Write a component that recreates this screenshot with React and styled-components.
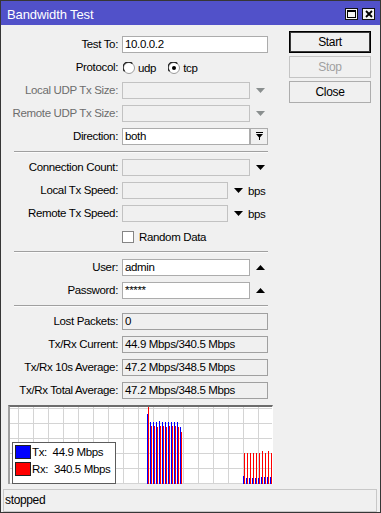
import styled, { createGlobalStyle } from "styled-components";

const GlobalStyle = createGlobalStyle`
  * { box-sizing: border-box; }
  html, body {
    margin: 0;
    padding: 0;
    background: #f0f0f0;
  }
  body {
    font-family: "Liberation Sans", Arial, sans-serif;
    font-size: 11.5px;
    letter-spacing: -0.35px;
    color: #000;
  }
`;

const Window = styled.div`
  width: 381px;
  height: 513px;
  border: 1px solid #363636;
  background: #f0f0f0;
  display: flex;
  flex-direction: column;
`;

const TitleBar = styled.div`
  height: 24px;
  flex: none;
  background: #5151c9;
  display: flex;
  align-items: center;
  padding: 0 5px 0 6px;
`;

const Title = styled.div`
  color: #fff;
  font-size: 13px;
  letter-spacing: -0.1px;
  padding-top: 3px;
`;

const TitleButtons = styled.div`
  margin-left: auto;
  margin-top: 2px;
  display: flex;
  gap: 4px;
`;

const TitleBtn = styled.div`
  width: 13px;
  height: 12px;
  border: 1px solid #111;
  background: #f4f4f4;
  display: flex;
  align-items: center;
  justify-content: center;
`;

const Main = styled.div`
  display: flex;
  align-items: flex-start;
  flex: 1;
`;

const Form = styled.div`
  margin-left: 7px;
  padding-top: 11px;
  display: grid;
  grid-template-columns: 110px 151px;
  column-gap: 4px;
  row-gap: 6px;
`;

const Label = styled.div`
  height: 17px;
  line-height: 17px;
  text-align: right;
  white-space: nowrap;
  color: ${(p) => (p.$disabled ? "#6d6d6d" : "#000")};
`;

const Field = styled.div`
  height: 17px;
  display: flex;
  align-items: center;
`;

const Input = styled.div`
  width: ${(p) => p.$w}px;
  height: 17px;
  line-height: 15px;
  padding-left: 2px;
  white-space: nowrap;
  overflow: hidden;
  border: 1px solid
    ${(p) => (p.$kind === "disabled" ? "#c2c2c2" : p.$kind === "readonly" ? "#a0a0a0" : "#acacac")};
  background: ${(p) => (p.$kind === "edit" ? "#fff" : "#f0f0f0")};
`;

const DropBtn = styled.div`
  width: 18px;
  height: 17px;
  border: 1px solid #acacac;
  background: #f0f0f0;
  display: flex;
  align-items: center;
  justify-content: center;
`;

const Arrow = styled.svg`
  flex: none;
  margin-left: 6px;
`;

const Unit = styled.span`
  margin-left: 5px;
`;

const RadioItem = styled.label`
  display: flex;
  align-items: center;
  gap: 3px;
  margin-right: 11px;
  margin-left: 1px;
`;

const Check = styled.div`
  width: 12px;
  height: 12px;
  border: 1px solid #858585;
  background: #fff;
  margin-right: 5px;
`;

const Separator = styled.div`
  grid-column: 1 / -1;
  margin-left: 6px;
  width: 254px;
  height: 2px;
  border-top: 1px solid #a0a0a0;
  border-bottom: 1px solid #fbfbfb;
`;

const Graph = styled.div`
  grid-column: 1 / -1;
  position: relative;
  height: 79px;
  background: #fff;
  border-top: 2px solid #6c6c6c;
  border-left: 2px solid #a0a0a0;
  border-right: 1px solid #fff;
`;

const Legend = styled.div`
  position: absolute;
  left: 2px;
  top: 35px;
  width: 104px;
  height: 42px;
  border: 1px solid #5c5c5c;
  background: #fff;
  padding: 2px 0 0 2px;
  display: flex;
  flex-direction: column;
  gap: 3px;
`;

const LegendItem = styled.div`
  display: flex;
  align-items: center;
  height: 14px;
  white-space: pre;
  font-size: 11.5px;
`;

const Swatch = styled.div`
  width: 16px;
  height: 14px;
  margin-right: 1px;
  border: 1px solid #222;
  background: ${(p) => p.$color};
`;

const ButtonCol = styled.div`
  margin-left: 16px;
  margin-top: 6px;
  width: 82px;
  display: flex;
  flex-direction: column;
  gap: 3px;
`;

const Button = styled.div`
  height: 22px;
  line-height: 20px;
  text-align: center;
  font-size: 12px;
  background: #f0f0f0;
  border: 1px solid ${(p) => (p.$default ? "#000" : p.$disabled ? "#c4c4c4" : "#adadad")};
  box-shadow: ${(p) => (p.$default ? "inset 0 0 0 1px #3a3a3a" : "none")};
  color: ${(p) => (p.$disabled ? "#a0a0a0" : "#000")};
`;

const StatusBar = styled.div`
  flex: none;
  height: 23px;
  margin: 0 3px 0 2px;
  border: 1px solid #c8c8c8;
  padding-left: 1px;
  line-height: 21px;
  font-size: 12px;
`;

function Tri({ up, color = "#000" }) {
  return (
    <Arrow width="9" height="5" viewBox="0 0 9 5">
      <polygon points={up ? "0,5 9,5 4.5,0" : "0,0 9,0 4.5,5"} fill={color} />
    </Arrow>
  );
}

function Radio({ checked }) {
  return (
    <svg width="12" height="12" viewBox="0 0 12 12">
      <circle cx="6" cy="6" r="5.5" fill="#fff" stroke="#9a9a9a" />
      <path d="M1.6 9.4 A5 5 0 0 1 9.4 1.6" fill="none" stroke="#222" strokeWidth="1.3" />
      {checked && <circle cx="6" cy="6" r="2" fill="#000" />}
    </svg>
  );
}

const blue1 = [414, 422, 422, 422, 421, 422, 422, 422, 422, 422, 422, 427];
const red1 = [407, 426, 426, 427, 426, 426, 427, 426, 426, 426, 427, 432];
const blue2 = [476, 478, 478, 478, 478, 478, 477, 477, 477, 477];
const red2 = [453, 453, 453, 453, 453, 453, 451, 453, 451, 453];

function Chart() {
  const vlines = [];
  for (let x = 8; x < 262; x += 15) vlines.push(x);
  const hlines = [1, 16, 31, 46, 61, 76];
  const bar = (x, top, color, k) => (
    <rect key={k} x={x} y={top - 407} width="1" height={77 - (top - 407)} fill={color} />
  );
  return (
    <svg width="262" height="77" viewBox="0 0 262 77" style={{ display: "block" }}>
      {vlines.map((x) => (
        <line key={"v" + x} x1={x + 0.5} y1="0" x2={x + 0.5} y2="77" stroke="#d4d4d4" />
      ))}
      {hlines.map((y) => (
        <line key={"h" + y} x1="0" y1={y + 0.5} x2="262" y2={y + 0.5} stroke="#d4d4d4" />
      ))}
      {blue1.map((t, i) => bar(137 + 3 * i, t, "#0000ff", "b1" + i))}
      {red1.map((t, i) => bar(138 + 3 * i, t, "#ff0000", "r1" + i))}
      {blue2.map((t, i) => bar(233 + 3 * i, t, "#0000ff", "b2" + i))}
      {red2.map((t, i) => bar(234 + 3 * i, t, "#ff0000", "r2" + i))}
    </svg>
  );
}

export default function App() {
  return (
    <>
      <GlobalStyle />
      <Window>
        <TitleBar>
          <Title>Bandwidth Test</Title>
          <TitleButtons>
            <TitleBtn>
              <svg width="9" height="8" viewBox="0 0 9 8">
                <rect x="0.5" y="0.5" width="8" height="7" fill="none" stroke="#000" />
                <line x1="0" y1="1.5" x2="9" y2="1.5" stroke="#000" />
              </svg>
            </TitleBtn>
            <TitleBtn>
              <svg width="8" height="8" viewBox="0 0 8 8">
                <path d="M1 1 L7 7 M7 1 L1 7" stroke="#000" strokeWidth="1.8" />
              </svg>
            </TitleBtn>
          </TitleButtons>
        </TitleBar>
        <Main>
          <Form>
            <Label>Test To:</Label>
            <Field>
              <Input $w={146} $kind="edit">10.0.0.2</Input>
            </Field>

            <Label>Protocol:</Label>
            <Field>
              <RadioItem>
                <Radio />
                udp
              </RadioItem>
              <RadioItem>
                <Radio checked />
                tcp
              </RadioItem>
            </Field>

            <Label $disabled>Local UDP Tx Size:</Label>
            <Field>
              <Input $w={128} $kind="disabled" />
              <Tri color="#8a8f8f" />
            </Field>

            <Label $disabled>Remote UDP Tx Size:</Label>
            <Field>
              <Input $w={128} $kind="disabled" />
              <Tri color="#8a8f8f" />
            </Field>

            <Label>Direction:</Label>
            <Field>
              <Input $w={128} $kind="edit">both</Input>
              <DropBtn>
                <svg width="7" height="10" viewBox="0 0 7 10">
                  <rect x="0" y="0" width="7" height="1" fill="#000" />
                  <polygon points="0,2 7,2 3.5,6" fill="#000" />
                  <rect x="3" y="5" width="1" height="3" fill="#000" />
                </svg>
              </DropBtn>
            </Field>

            <Separator />

            <Label>Connection Count:</Label>
            <Field>
              <Input $w={128} $kind="disabled" />
              <Tri />
            </Field>

            <Label>Local Tx Speed:</Label>
            <Field>
              <Input $w={106} $kind="disabled" />
              <Tri />
              <Unit>bps</Unit>
            </Field>

            <Label>Remote Tx Speed:</Label>
            <Field>
              <Input $w={106} $kind="disabled" />
              <Tri />
              <Unit>bps</Unit>
            </Field>

            <Label />
            <Field>
              <Check />
              Random Data
            </Field>

            <Separator />

            <Label>User:</Label>
            <Field>
              <Input $w={128} $kind="edit">admin</Input>
              <Tri up />
            </Field>

            <Label>Password:</Label>
            <Field>
              <Input $w={128} $kind="edit">*****</Input>
              <Tri up />
            </Field>

            <Separator />

            <Label>Lost Packets:</Label>
            <Field>
              <Input $w={146} $kind="readonly">0</Input>
            </Field>

            <Label>Tx/Rx Current:</Label>
            <Field>
              <Input $w={146} $kind="readonly">44.9 Mbps/340.5 Mbps</Input>
            </Field>

            <Label>Tx/Rx 10s Average:</Label>
            <Field>
              <Input $w={146} $kind="readonly">47.2 Mbps/348.5 Mbps</Input>
            </Field>

            <Label>Tx/Rx Total Average:</Label>
            <Field>
              <Input $w={146} $kind="readonly">47.2 Mbps/348.5 Mbps</Input>
            </Field>

            <Graph>
              <Chart />
              <Legend>
                <LegendItem>
                  <Swatch $color="#0000ff" />
                  {"Tx:  44.9 Mbps"}
                </LegendItem>
                <LegendItem>
                  <Swatch $color="#ff0000" />
                  {"Rx:  340.5 Mbps"}
                </LegendItem>
              </Legend>
            </Graph>
          </Form>
          <ButtonCol>
            <Button $default>Start</Button>
            <Button $disabled>Stop</Button>
            <Button>Close</Button>
          </ButtonCol>
        </Main>
        <StatusBar>stopped</StatusBar>
      </Window>
    </>
  );
}
